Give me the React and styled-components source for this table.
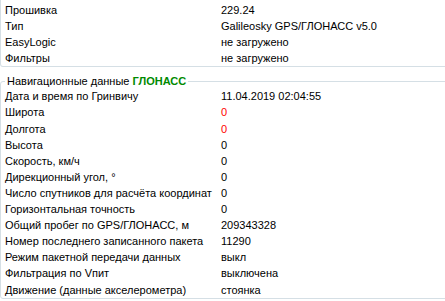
import React from "react";
import styled, { createGlobalStyle } from "styled-components";

const deviceRows = [
  { label: "Прошивка", value: "229.24" },
  { label: "Тип", value: "Galileosky GPS/ГЛОНАСС v5.0" },
  { label: "EasyLogic", value: "не загружено" },
  { label: "Фильтры", value: "не загружено" },
];

const navRows = [
  { label: "Дата и время по Гринвичу", value: "11.04.2019 02:04:55" },
  { label: "Широта", value: "0", alert: true },
  { label: "Долгота", value: "0", alert: true },
  { label: "Высота", value: "0" },
  { label: "Скорость, км/ч", value: "0" },
  { label: "Дирекционный угол, °", value: "0" },
  { label: "Число спутников для расчёта координат", value: "0" },
  { label: "Горизонтальная точность", value: "0" },
  { label: "Общий пробег по GPS/ГЛОНАСС, м", value: "209343328" },
  { label: "Номер последнего записанного пакета", value: "11290" },
  { label: "Режим пакетной передачи данных", value: "выкл" },
  { label: "Фильтрация по Vпит", value: "выключена" },
  { label: "Движение (данные акселерометра)", value: "стоянка" },
];

const GlobalStyle = createGlobalStyle`
  html, body {
    margin: 0;
    padding: 0;
    background: #ffffff;
    overflow: hidden;
  }
  body {
    font-family: "Liberation Sans", Arial, sans-serif;
    font-size: 11px;
    color: #000000;
  }
`;

const Page = styled.div`
  width: 448px;
  height: 301px;
  overflow: hidden;
`;

// Windows-style group box; the first one has its top edge scrolled away
const GroupBox = styled.fieldset`
  margin: ${({ $first }) => ($first ? "0" : "7px 0 0 0")};
  padding: ${({ $first }) => ($first ? "2px 0 0 0" : "0")};
  border: 1px solid #d5dfe5;
  border-top-width: ${({ $first }) => ($first ? "0" : "1px")};
  border-radius: ${({ $first }) => ($first ? "0 0 3px 3px" : "3px")};
  min-width: 0;
`;

const Legend = styled.legend`
  margin-left: 4px;
  padding: 0 2px;
  line-height: 14px;
  color: #000000;
`;

const Accent = styled.b`
  color: #008a00;
`;

const Rows = styled.div`
  display: flex;
  flex-direction: column;
  padding-left: 4px;
`;

const Row = styled.div`
  display: grid;
  grid-template-columns: 216px 1fr;
  height: 16.1px;
  line-height: 16.1px;
  white-space: nowrap;
`;

const Label = styled.span``;

const Value = styled.span`
  color: ${({ $alert }) => ($alert ? "#ff0000" : "#000000")};
`;

const Section = ({ rows }) => (
  <Rows>
    {rows.map((r) => (
      <Row key={r.label}>
        <Label>{r.label}</Label>
        <Value $alert={r.alert}>{r.value}</Value>
      </Row>
    ))}
  </Rows>
);

export default function App() {
  return (
    <Page>
      <GlobalStyle />
      <GroupBox $first>
        <Section rows={deviceRows} />
      </GroupBox>
      <GroupBox>
        <Legend>
          Навигационные данные <Accent>ГЛОНАСС</Accent>
        </Legend>
        <Section rows={navRows} />
      </GroupBox>
    </Page>
  );
}
